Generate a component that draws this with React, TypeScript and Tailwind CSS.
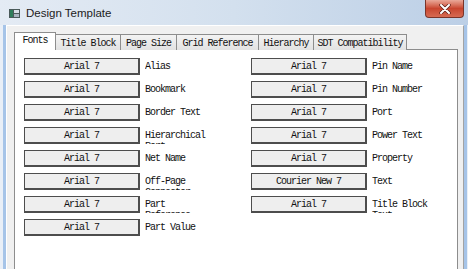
import React from 'react';

const tabs = [
  { name: 'Title Block', w: 'w-[66px]' },
  { name: 'Page Size', w: 'w-[57px]' },
  { name: 'Grid Reference', w: 'w-[83px]' },
  { name: 'Hierarchy', w: 'w-[56px]' },
  { name: 'SDT Compatibility', w: 'w-[94px]' },
];

const leftRows = [
  { font: 'Arial 7', label: 'Alias' },
  { font: 'Arial 7', label: 'Bookmark' },
  { font: 'Arial 7', label: 'Border Text' },
  { font: 'Arial 7', label: 'Hierarchical Port' },
  { font: 'Arial 7', label: 'Net Name' },
  { font: 'Arial 7', label: 'Off-Page Connector' },
  { font: 'Arial 7', label: 'Part Reference' },
  { font: 'Arial 7', label: 'Part Value' },
];

const rightRows = [
  { font: 'Arial 7', label: 'Pin Name' },
  { font: 'Arial 7', label: 'Pin Number' },
  { font: 'Arial 7', label: 'Port' },
  { font: 'Arial 7', label: 'Power Text' },
  { font: 'Arial 7', label: 'Property' },
  { font: 'Courier New 7', label: 'Text' },
  { font: 'Arial 7', label: 'Title Block Text' },
];

const mono = "font-['Liberation_Mono',monospace] text-[10px] tracking-[-1px] text-[#111]";

// label box is a fixed height, so a wrapped second line only peeks out
const FontRow = ({ font, label }: { font: string; label: string }) => (
  <div className="flex w-[227px] items-start gap-[5px]">
    <div
      className={`flex h-[17px] w-[116px] items-center justify-center border border-[#4d4d4d] border-b-2 border-r-2 bg-[#eeeeee] ${mono}`}
    >
      {font}
    </div>
    <div className={`h-[17px] w-[66px] overflow-hidden pt-[3px] leading-[11px] ${mono}`}>{label}</div>
  </div>
);

const App = () => {
  return (
    <div className="flex h-[269px] w-[468px] flex-col overflow-hidden bg-gradient-to-b from-[#dfe8f3] to-[#c9d9eb]">
      {/* title bar */}
      <div className="relative flex h-[25px] items-center bg-gradient-to-r from-[#e4ebf4] via-[#d3e0ee] to-[#bccfe6] pl-[9px] pt-[2px]">
        <svg width="11" height="9" viewBox="0 0 11 9">
          <rect x="0" y="0" width="11" height="9" fill="#4a5a5a" />
          <rect x="1" y="1" width="3" height="7" fill="#2f7d5a" />
          <rect x="5" y="1" width="5" height="3" fill="#d8dee6" />
          <rect x="5" y="5" width="5" height="3" fill="#aab4c0" />
        </svg>
        <span className="ml-[6px] font-['Liberation_Sans',sans-serif] text-[11.5px] text-[#1c1c1c]">Design Template</span>
        <div className="absolute right-[4px] top-0 flex h-[18px] w-[39px] items-center justify-center rounded-b-[4px] border border-t-0 border-[#7a3429] bg-gradient-to-b from-[#e9a899] via-[#c8452f] to-[#d66a52]">
          <svg width="12" height="10" viewBox="0 0 12 10">
            <path d="M2 1 L10 9 M10 1 L2 9" stroke="#5a2018" strokeWidth="3.4" strokeLinecap="round" />
            <path d="M2 1 L10 9 M10 1 L2 9" stroke="#ffffff" strokeWidth="2" strokeLinecap="round" />
          </svg>
        </div>
      </div>

      {/* body */}
      <div className="flex flex-1">
        <div className="w-[3px] bg-[#e9eff7]" />
        <div className="w-[3px] bg-[#a6c4e8]" />
        <div className="flex w-[458px] flex-col border-l border-t border-r border-white border-r-[#a3a3a3] bg-[#f0f0f0] pl-[7px] pt-[6px]">
          {/* tabs */}
          <div className="relative z-10 flex h-[18px] items-end">
            <div className="flex h-[18px] w-[42px] items-start justify-center border border-b-0 border-[#8d8d8d] bg-white pt-[2px] leading-[12px]">
              <span className={mono}>Fonts</span>
            </div>
            {tabs.map(t => (
              <div
                key={t.name}
                className={`-ml-px flex h-[16px] ${t.w} items-start justify-center border border-b-0 border-[#8d8d8d] bg-gradient-to-b from-[#f3f3f3] to-[#e2e2e2] pt-[3px] leading-[12px]`}
              >
                <span className={mono}>{t.name}</span>
              </div>
            ))}
          </div>

          {/* panel */}
          <div className="-mt-px flex w-[444px] flex-1 border border-b-0 border-[#8d8d8d] bg-white pl-[9px] pt-[8px]">
            <div className="flex flex-col gap-[6px]">
              {leftRows.map(r => (
                <FontRow key={r.label} {...r} />
              ))}
            </div>
            <div className="flex flex-col gap-[6px]">
              {rightRows.map(r => (
                <FontRow key={r.label} {...r} />
              ))}
            </div>
          </div>
        </div>
        <div className="w-[3px] bg-[#a6c4e8]" />
        <div className="w-[1px] bg-[#e9eff7]" />
      </div>
    </div>
  );
};

export default App;
